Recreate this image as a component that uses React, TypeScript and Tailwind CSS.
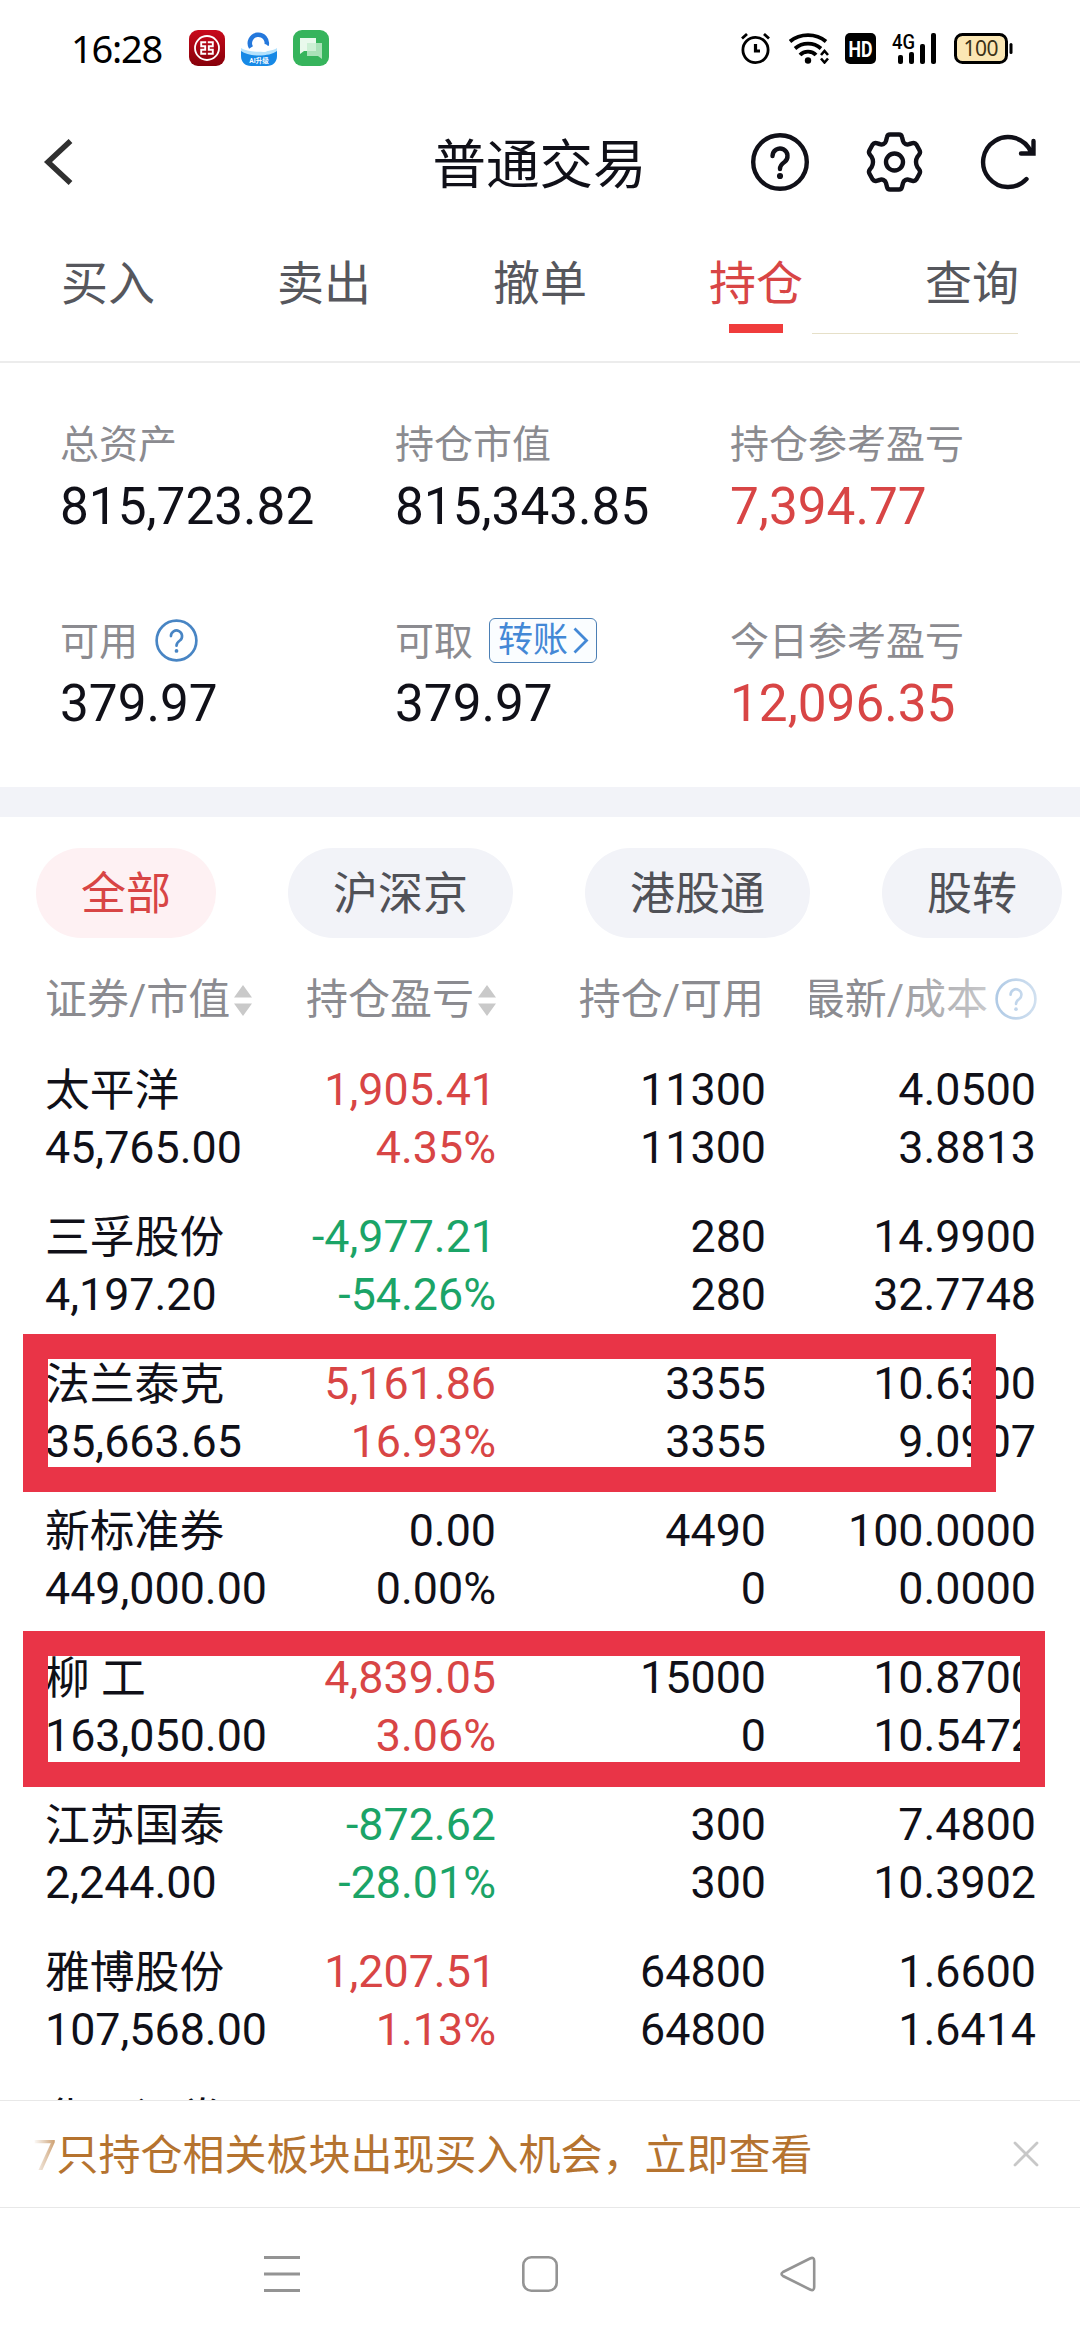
import type { ReactNode } from "react";

type Tone = "up" | "down" | "flat";

type Holding = {
  name: string;
  marketValue: string;
  profit: string;
  profitRate: string;
  tone: Tone;
  amount: string;
  available: string;
  price: string;
  cost: string;
};

const TONE_CLASS: Record<Tone, string> = {
  up: "text-[#d84545]",
  down: "text-[#1ba467]",
  flat: "text-[#101018]",
};

const TABS = ["买入", "卖出", "撤单", "持仓", "查询"];

const MARKETS = ["全部", "沪深京", "港股通", "股转"];

const HOLDINGS: Holding[] = [
  { name: "太平洋", marketValue: "45,765.00", profit: "1,905.41", profitRate: "4.35%", tone: "up", amount: "11300", available: "11300", price: "4.0500", cost: "3.8813" },
  { name: "三孚股份", marketValue: "4,197.20", profit: "-4,977.21", profitRate: "-54.26%", tone: "down", amount: "280", available: "280", price: "14.9900", cost: "32.7748" },
  { name: "法兰泰克", marketValue: "35,663.65", profit: "5,161.86", profitRate: "16.93%", tone: "up", amount: "3355", available: "3355", price: "10.6300", cost: "9.0907" },
  { name: "新标准券", marketValue: "449,000.00", profit: "0.00", profitRate: "0.00%", tone: "flat", amount: "4490", available: "0", price: "100.0000", cost: "0.0000" },
  { name: "柳 工", marketValue: "163,050.00", profit: "4,839.05", profitRate: "3.06%", tone: "up", amount: "15000", available: "0", price: "10.8700", cost: "10.5472" },
  { name: "江苏国泰", marketValue: "2,244.00", profit: "-872.62", profitRate: "-28.01%", tone: "down", amount: "300", available: "300", price: "7.4800", cost: "10.3902" },
  { name: "雅博股份", marketValue: "107,568.00", profit: "1,207.51", profitRate: "1.13%", tone: "up", amount: "64800", available: "64800", price: "1.6600", cost: "1.6414" },
  { name: "华西证券", marketValue: "", profit: "", profitRate: "", tone: "flat", amount: "", available: "", price: "", cost: "" },
];

export default function App() {
  return (
    <div lang="zh-CN" className="relative flex h-[2340px] w-[1080px] flex-col overflow-hidden bg-white font-['Roboto','Noto_Sans_CJK_SC',sans-serif] text-[#101018]">
      <StatusBar />
      <Header />
      <Tabs />
      <Summary />
      <div className="h-[30px] shrink-0 bg-[#f2f3f8]" />
      <MarketFilter />
      <HoldingTable />
      <Notice />
      <SystemNav />
      <div className="absolute top-[1334px] left-[23px] h-[158px] w-[973px] border-[25px] border-[#e93447]" />
      <div className="absolute top-[1631px] left-[23px] h-[156px] w-[1022px] border-[25px] border-[#e93447]" />
    </div>
  );
}

function StatusBar() {
  return (
    <div className="flex h-24 shrink-0 items-center pr-[67px] pl-[71px] text-black">
      <span className="w-[118px] font-['Noto_Sans',sans-serif] text-[38px] leading-[54px] tracking-[-1.2px]">16:28</span>
      <div className="flex gap-4">
        <BankIcon />
        <BrowserIcon />
        <MessageIcon />
      </div>
      <div className="ml-auto flex items-center">
        <AlarmIcon />
        <WifiIcon />
        <svg className="ml-4 h-[31px] w-[31px]" viewBox="0 0 31 31">
          <rect width="31" height="31" rx="5" />
          <text x="15.5" y="23.5" textAnchor="middle" fill="#fff" fontSize="22" fontWeight="700" fontFamily="Roboto, sans-serif" textLength="24" lengthAdjust="spacingAndGlyphs">HD</text>
        </svg>
        <SignalIcon />
        <svg className="ml-[17px] h-[31px] w-[59px]" viewBox="0 0 59 31">
          <rect x="1.5" y="1.5" width="51" height="28" rx="7" fill="#fbe7b4" stroke="#000" strokeWidth="3" />
          <rect x="55.5" y="10" width="3" height="11" rx="1.5" />
          <text x="27" y="23" textAnchor="middle" fontSize="21" fontFamily="'Noto Sans', sans-serif" fill="#3b3218" textLength="35">100</text>
        </svg>
      </div>
    </div>
  );
}

function BankIcon() {
  return (
    <svg className="h-9 w-9" viewBox="0 0 36 36" fill="none">
      <defs>
        <linearGradient id="bank" x1="0" y1="0" x2="0" y2="1">
          <stop stopColor="#c90a1c" />
          <stop offset="1" stopColor="#86000a" />
        </linearGradient>
      </defs>
      <rect width="36" height="36" rx="9" fill="url(#bank)" />
      <circle cx="18" cy="18" r="12" stroke="#fff" strokeWidth="1.8" />
      <path d="M17.200 12.200h-5v4h4v3.600h-4v4h5M18.800 12.200h5v4h-4v3.600h4v4h-5" stroke="#fff" strokeWidth="1.900" />
    </svg>
  );
}

function BrowserIcon() {
  return (
    <svg className="h-9 w-9" viewBox="0 0 36 36" fill="none">
      <path d="M0 18c8 5 28 5 36 0v8H0z" fill="#b5e2fc" />
      <path d="M0 21c8 6 28 6 36 0v5c0 6-4 10-10 10H10C4 36 0 32 0 26z" fill="#1689e6" />
      <path d="M10 17.500a8.500 8.500 0 1 1 15.500-2" stroke="#2478dc" strokeWidth="4.500" />
      <circle cx="18" cy="16" r="5" fill="#fff" />
      <circle cx="23" cy="18" r="4" fill="#fff" />
      <text x="18" y="33" textAnchor="middle" fill="#fff" fontSize="6.500" fontWeight="700" fontFamily="Roboto, 'Noto Sans CJK SC', sans-serif">AI升级</text>
    </svg>
  );
}

function MessageIcon() {
  return (
    <svg className="h-9 w-9" viewBox="0 0 36 36">
      <rect width="36" height="36" rx="9" fill="#36b45c" />
      <path d="M14 13h15v16l-4-3H14z" fill="#a9e2b8" />
      <path d="M7 8h16v13H11l-4 3z" fill="#e9f9ec" />
      <path d="M14 13h9v8h-9z" fill="#cdf0d5" />
    </svg>
  );
}

function AlarmIcon() {
  return (
    <svg className="h-[33px] w-[29px]" viewBox="0 0 29 33" fill="none" stroke="currentColor" strokeWidth="2.8">
      <circle cx="14.5" cy="18" r="12.6" />
      <path d="M14.5 12v7H19" strokeWidth="3.200" />
      <path d="M1 6.500l5-4.500M28 6.500L23 2" />
    </svg>
  );
}

function WifiIcon() {
  return (
    <svg className="ml-[19px] h-[31px] w-10" viewBox="0 0 40 31" fill="none" stroke="currentColor" strokeWidth="3.8">
      <path d="M1 8.500c10-8.500 26-8.500 36 0M6 15.500c7.500-6.500 18.500-6.500 26 0M11 22c4-4.500 12-4.500 16 0" />
      <circle cx="19" cy="27.500" r="3.200" fill="currentColor" stroke="none" />
      <path d="M32 22l3.500-4 3.500 4M32 25.500l3.500 4 3.500-4" strokeWidth="2.600" />
    </svg>
  );
}

function SignalIcon() {
  return (
    <svg className="ml-4 h-[31px] w-[45px]" viewBox="0 0 45 31">
      <text x="0" y="15.500" fontSize="21" fontWeight="500" fontFamily="Roboto, sans-serif" textLength="23" lengthAdjust="spacingAndGlyphs">4G</text>
      <rect x="6" y="22" width="5" height="9" rx="2" />
      <rect x="17" y="19" width="5" height="12" rx="2" />
      <rect x="28" y="11" width="5" height="20" rx="2" />
      <rect x="39" y="0" width="5" height="31" rx="2" />
    </svg>
  );
}

function Header() {
  return (
    <div className="grid h-[132px] shrink-0 grid-cols-3 items-center pr-11 pl-[43px]">
      <svg className="h-[46px] w-[30px]" viewBox="0 0 30 46" fill="none" stroke="#303030" strokeWidth="5.500">
        <path d="M27.500 2L5 23l22.500 21" />
      </svg>
      <h1 className="pt-[7px] text-center text-[53.500px] leading-[64px] whitespace-nowrap">普通交易</h1>
      <div className="flex items-center justify-end gap-[57px]">
        <HelpIcon className="h-[58px] w-[58px]" strokeWidth={4.4} />
        <svg className="h-[60px] w-[57px]" viewBox="0 0 57 60" fill="none" stroke="#101018" strokeWidth="4.400" strokeLinejoin="round">
          <path d="M24 2.500h9q2.500 0 3 2.500l1 4q.5 2 2.500 3t4 0l3-.8q2.500-.7 4 1.500l3 5.500q1.300 2.500-.5 4.500l-1.500 2q-1.500 2.500-1.500 5.300t1.500 5.300l1.500 2q1.800 2 .5 4.500l-3 5.500q-1.500 2.200-4 1.500l-3-.8q-2-1-4 0t-2.500 3l-1 4q-.5 2.500-3 2.500h-9q-2.500 0-3-2.500l-1-4q-.5-2-2.500-3t-4 0l-3 .8q-2.500.7-4-1.500l-3-5.500q-1.300-2.500.5-4.500l1.500-2q1.500-2.500 1.500-5.300t-1.500-5.300l-1.500-2q-1.800-2-.5-4.500l3-5.500q1.500-2.200 4-1.500l3 .8q2 1 4 0t2.500-3l1-4q.5-2.500 3-2.500z" />
          <circle cx="28.500" cy="30" r="8.500" />
        </svg>
        <svg className="h-[56px] w-[56px]" viewBox="0 0 56 56" fill="none" stroke="#101018" strokeWidth="4.400" strokeLinecap="round">
          <path d="M46.500 45a25 25 0 1 1 4.500-27M53.500 7v12.500H41" />
        </svg>
      </div>
    </div>
  );
}

function HelpIcon({ className, strokeWidth }: { className: string; strokeWidth: number }) {
  return (
    <svg className={className} viewBox="0 0 58 58" fill="none" stroke="currentColor" strokeWidth={strokeWidth} strokeLinecap="round">
      <circle cx="29" cy="29" r="26.800" />
      <path d="M21.500 23a7.500 7.500 0 1 1 12 6c-3 2-4.500 3.500-4.500 7" />
      <circle cx="29" cy="43" r={strokeWidth * 0.7} fill="currentColor" stroke="none" />
    </svg>
  );
}

function Tabs() {
  return (
    <div className="relative grid h-[135px] shrink-0 grid-cols-5 border-b-2 border-[#ececec] pt-[29px]">
      {TABS.map((tab) => (
        <div key={tab} className={tab === "持仓" ? "flex flex-col items-center text-[#d84545]" : "flex flex-col items-center text-[#56575d]"}>
          <span className="text-[47px] leading-[54px]">{tab}</span>
          {tab === "持仓" && <span className="mt-[13px] h-[9px] w-[54px] bg-[#f03c3c]" />}
        </div>
      ))}
      <div className="absolute top-[105px] left-[812px] h-px w-[206px] bg-[#e6e0c8]" />
    </div>
  );
}

function Summary() {
  return (
    <div className="grid h-[424px] shrink-0 grid-cols-[335px_335px_1fr] content-start gap-y-[87px] pt-[62px] pl-[60px]">
      <SummaryItem label="总资产" value="815,723.82" />
      <SummaryItem label="持仓市值" value="815,343.85" />
      <SummaryItem label="持仓参考盈亏" value="7,394.77" up />
      <SummaryItem label="可用" value="379.97">
        <HelpIcon className="mb-1 ml-[17px] h-[43px] w-[43px] text-[#4885c4]" strokeWidth={3.6} />
      </SummaryItem>
      <SummaryItem label="可取" value="379.97">
        <span className="mb-1 ml-[16px] flex h-[45px] w-[108px] shrink-0 items-center rounded-[6px] border border-[#4b7fb5] bg-[#fafdff] pl-2 text-[35px] leading-[43px] text-[#4388d6]">
          转账
          <svg className="ml-[5px] h-[27px] w-4" viewBox="0 0 16 27" fill="none" stroke="currentColor" strokeWidth="2.800">
            <path d="M1.500 1.500l12 12-12 12" />
          </svg>
        </span>
      </SummaryItem>
      <SummaryItem label="今日参考盈亏" value="12,096.35" up />
    </div>
  );
}

function SummaryItem({ label, value, up, children }: { label: string; value: string; up?: boolean; children?: ReactNode }) {
  return (
    <div>
      <div className="flex h-10 items-center text-[39px] leading-10 whitespace-nowrap text-[#8b8b90]">
        {label}
        {children}
      </div>
      <div className={up ? "mt-3.5 text-[51.300px] leading-[56px] text-[#d84545]" : "mt-3.5 text-[51.300px] leading-[56px]"}>{value}</div>
    </div>
  );
}

function MarketFilter() {
  return (
    <div className="flex shrink-0 gap-[72px] pt-[31px] pl-9">
      {MARKETS.map((market, index) => (
        <button
          key={market}
          type="button"
          className={
            index === 0
              ? "h-[90px] rounded-full bg-[#fef1f3] px-[45px] pt-[3px] text-[45px] leading-[87px] whitespace-nowrap text-[#d84545]"
              : "h-[90px] rounded-full bg-[#f2f3f8] px-[45px] pt-[3px] text-[45px] leading-[87px] whitespace-nowrap text-[#505157]"
          }
        >
          {market}
        </button>
      ))}
    </div>
  );
}

function SortIcon() {
  return (
    <svg className="ml-1 h-[31px] w-[18px]" viewBox="0 0 18 31" fill="#c9c9c9">
      <path d="M9 0l9 12.500H0zM9 31l9-12.500H0z" />
    </svg>
  );
}

function HoldingTable() {
  return (
    <div className="h-[1162px] shrink-0 overflow-hidden pr-11 pl-[45px]">
      <div className="mt-10 grid h-11 grid-cols-[210px_241px_270px_271px] text-[42px] leading-11 whitespace-nowrap text-[#8b8b90]">
        <div className="flex items-center">证券/市值<SortIcon /></div>
        <div className="flex items-center justify-end">持仓盈亏<SortIcon /></div>
        <div className="mr-0.5 text-right">持仓/可用</div>
        <div className="relative ml-[44px] flex items-center justify-end overflow-hidden">
          最新/成本
          <HelpIcon className="mb-0.5 ml-[7px] h-[42px] w-[42px] shrink-0 text-[#4885c4]" strokeWidth={3.6} />
          <div className="absolute inset-y-0 right-0 w-[170px] bg-linear-to-r from-white/0 to-white/75" />
        </div>
      </div>
      <div className="mt-[39px] flex flex-col gap-[31px] text-[44.800px] leading-[58px] whitespace-nowrap">
        {HOLDINGS.map((item) => (
          <div key={item.name} className="grid h-[116px] shrink-0 grid-cols-[210px_241px_270px_270px] text-right">
            <div className="text-left">
              <div className="pt-0.5 leading-[56px]">{item.name}</div>
              <div>{item.marketValue}</div>
            </div>
            <div className={TONE_CLASS[item.tone]}>
              <div>{item.profit}</div>
              <div>{item.profitRate}</div>
            </div>
            <div>
              <div>{item.amount}</div>
              <div>{item.available}</div>
            </div>
            <div>
              <div>{item.price}</div>
              <div>{item.cost}</div>
            </div>
          </div>
        ))}
      </div>
    </div>
  );
}

function Notice() {
  return (
    <div className="flex h-[108px] shrink-0 items-center justify-between border-y border-[#e8e8e8] pr-[41px] pl-[33px]">
      <p className="pt-1 text-[42px] leading-[56px] whitespace-nowrap text-[#b5732f]">
        <span className="bg-linear-to-r from-white via-[#e3cdb6] to-[#c99660] bg-clip-text text-transparent">7</span>
        只持仓相关板块出现买入机会，立即查看
      </p>
      <svg className="h-[26px] w-[26px]" viewBox="0 0 26 26" fill="none" stroke="#c8c8c8" strokeWidth="2.800" strokeLinecap="round">
        <path d="M2 2l22 22M24 2L2 24" />
      </svg>
    </div>
  );
}

function SystemNav() {
  return (
    <div className="flex flex-1 items-center justify-center gap-[222px]">
      <svg className="h-9 w-9" viewBox="0 0 36 36" stroke="#949494" strokeWidth="3">
        <path d="M0 1.500h36M0 18h36M0 34.500h36" />
      </svg>
      <svg className="h-9 w-9" viewBox="0 0 36 36" fill="none" stroke="#949494" strokeWidth="2.600">
        <rect x="1.300" y="1.300" width="33.400" height="33.400" rx="8" />
      </svg>
      <svg className="h-9 w-9" viewBox="0 0 36 36" fill="none" stroke="#949494" strokeWidth="2.600" strokeLinejoin="round">
        <path d="M30 2.500q4.200-2 4.200 2.500v26q0 4.500-4.200 2.500L3 20q-3-2 0-4z" />
      </svg>
    </div>
  );
}
